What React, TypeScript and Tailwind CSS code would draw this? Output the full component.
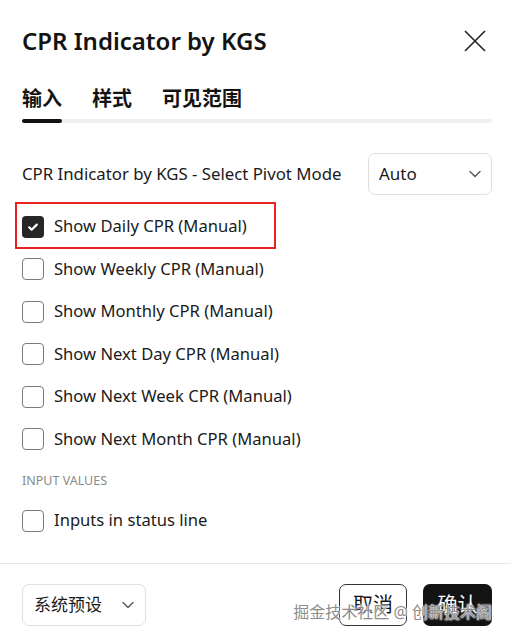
import React from "react";

const font = { fontFamily: '"Noto Sans", "Noto Sans CJK SC", sans-serif' };

function Box({ checked }: { checked?: boolean }) {
  if (checked)
    return (
      <div className="w-[22px] h-[22px] rounded-[4px] bg-[#262626] flex items-center justify-center shrink-0">
        <svg width="14" height="14" viewBox="0 0 14 14" fill="none">
          <path d="M3.2 7.3l2.4 2.4L10.8 4.6" stroke="white" strokeWidth="2.2" strokeLinecap="round" strokeLinejoin="round" />
        </svg>
      </div>
    );
  return <div className="w-[22px] h-[22px] rounded-[4px] border border-[#7a7a7a] shrink-0" />;
}

function Chevron() {
  return (
    <svg width="12" height="8" viewBox="0 0 12 8" fill="none">
      <path d="M1 1.5l5 5 5-5" stroke="#555" strokeWidth="1.4" strokeLinecap="round" strokeLinejoin="round" />
    </svg>
  );
}

function Row({ label, checked, highlight }: { label: string; checked?: boolean; highlight?: boolean }) {
  return (
    <div className="relative h-[42.5px] flex items-center gap-[10px]">
      {highlight && (
        <div className="absolute left-[-7px] top-[-4px] w-[261px] h-[47px] border-2 border-[#e8231f]" />
      )}
      <Box checked={checked} />
      <span className="text-[16.6px] text-[#1a1a1a]">{label}</span>
    </div>
  );
}

export default function App() {
  return (
    <div className="w-[511px] h-[639px] bg-white relative overflow-hidden" style={font}>
      <div className="h-[82px] flex items-center justify-between pl-[22px] pr-[24px]">
        <div className="text-[24px] font-semibold text-[#131313]">CPR Indicator by KGS</div>
        <svg width="24" height="24" viewBox="0 0 24 24" fill="none">
          <path d="M2 2l20 20M22 2L2 22" stroke="#222" strokeWidth="1.6" />
        </svg>
      </div>
      <div className="px-[22px] pr-[19px]">
        <div className="h-[34px] flex items-center gap-[30px] text-[20px] font-bold text-[#131313]">
          <span>输入</span>
          <span>样式</span>
          <span>可见范围</span>
        </div>
        <div className="mt-[3px] h-[4px] rounded-full bg-[#efefef] flex">
          <div className="w-[40px] h-[4px] rounded-full bg-[#131313]" />
        </div>
        <div className="mt-[30px] h-[42px] flex items-center justify-between">
          <span className="text-[16.8px] text-[#1a1a1a]">CPR Indicator by KGS - Select Pivot Mode</span>
          <div className="w-[124px] h-[42px] border border-[#e0e0e0] rounded-[7px] flex items-center justify-between pl-[10px] pr-[10px]">
            <span className="text-[17px] text-[#1a1a1a]">Auto</span>
            <Chevron />
          </div>
        </div>
        <div className="mt-[10.5px]">
          <Row label="Show Daily CPR (Manual)" checked highlight />
          <Row label="Show Weekly CPR (Manual)" />
          <Row label="Show Monthly CPR (Manual)" />
          <Row label="Show Next Day CPR (Manual)" />
          <Row label="Show Next Week CPR (Manual)" />
          <Row label="Show Next Month CPR (Manual)" />
        </div>
        <div className="h-[42px] flex items-center text-[12.5px] text-[#8a8a8a]">INPUT VALUES</div>
        <div className="-mt-[3px]">
          <Row label="Inputs in status line" />
        </div>
      </div>
      <div className="mt-[21px] border-t border-[#e6e6e6]" />
      <div className="pt-[20px] pl-[22px] pr-[19px] flex items-center justify-between">
        <div className="w-[124px] h-[42px] border border-[#e0e0e0] rounded-[7px] flex items-center justify-between pl-[11px] pr-[11px]">
          <span className="text-[17px] text-[#1a1a1a]">系统预设</span>
          <Chevron />
        </div>
        <div className="flex gap-[16px]">
          <div className="w-[68px] h-[42px] border border-[#333] rounded-[7px] flex items-center justify-center text-[20px] text-[#131313]">取消</div>
          <div className="w-[69px] h-[42px] bg-[#131313] rounded-[7px] flex items-center justify-center text-[20px] text-white">确认</div>
        </div>
      </div>
      <div
        className="absolute right-[19px] top-[600px] text-[16px] text-[#8d8d8d]"
        style={{ textShadow: "0 0 2px #fff, 0 0 2px #fff, 0 0 1px #fff" }}
      >
        掘金技术社区 @ 创新技术阁
      </div>
    </div>
  );
}
